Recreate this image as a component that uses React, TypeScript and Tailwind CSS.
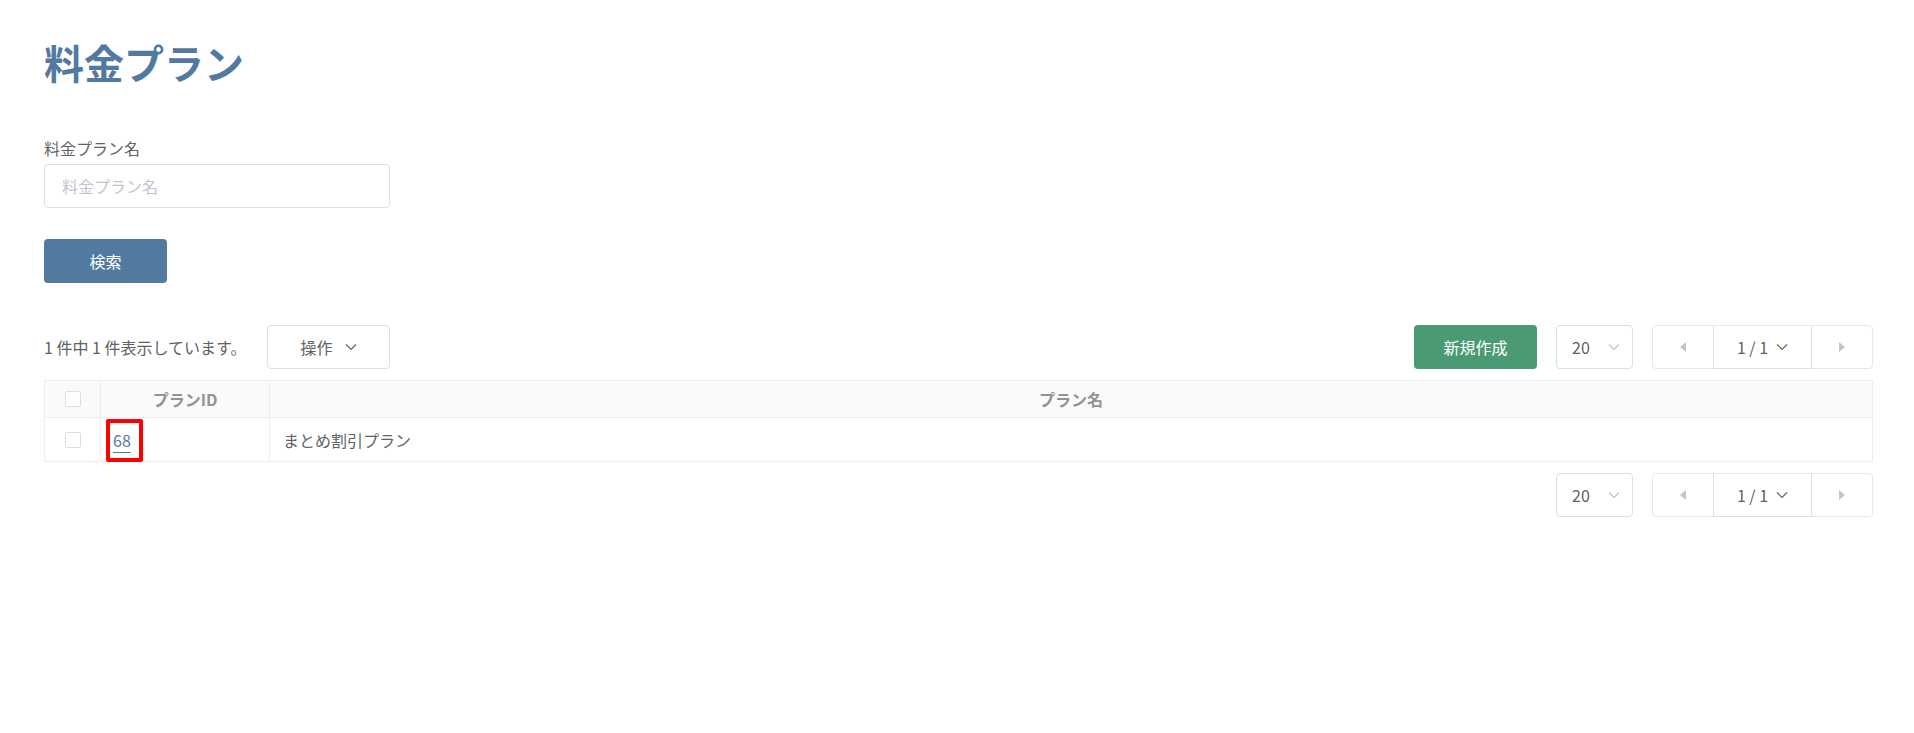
import React from 'react'

function Chevron({ className }: { className?: string }) {
    return (
        <svg viewBox="0 0 12 8" className={className} fill="none" stroke="currentColor" strokeWidth="1.2">
            <polyline points="1,1.5 6,6.5 11,1.5" />
        </svg>
    )
}

function Triangle({ dir }: { dir: 'left' | 'right' }) {
    return (
        <svg viewBox="0 0 6 10" className="w-[6px] h-[10px] text-[#c0c4cc]" fill="currentColor">
            {dir === 'left' ? <polygon points="6,0 6,10 0,5" /> : <polygon points="0,0 0,10 6,5" />}
        </svg>
    )
}

function Checkbox() {
    return <span className="block w-4 h-4 border border-[#dcdfe6] rounded-[2px] bg-white" />
}

function PageSize() {
    return (
        <div className="w-[77px] h-[44px] border border-[#dcdfe6] rounded-[4px] flex items-center justify-between pl-[15px] pr-[12px] text-[16px] text-[#606266] bg-white">
            <span>20</span>
            <Chevron className="w-[12px] h-[8px] text-[#c0c4cc]" />
        </div>
    )
}

function Pager() {
    return (
        <div className="flex h-[44px] border border-[#e4e7ed] rounded-[4px] bg-white">
            <div className="w-[60px] flex items-center justify-center">
                <Triangle dir="left" />
            </div>
            <div className="w-[99px] flex items-center justify-center gap-[8px] border-x border-b border-[#dcdfe6] -mb-px text-[16px] text-[#606266]">
                <span>1 / 1</span>
                <Chevron className="w-[12px] h-[8px] text-[#606266]" />
            </div>
            <div className="w-[60px] flex items-center justify-center">
                <Triangle dir="right" />
            </div>
        </div>
    )
}

export default function App() {
    return (
        <div className="bg-white pl-[44px] pr-[41px] font-['Noto_Sans_CJK_JP','Noto_Sans',sans-serif] text-[#606266]">
            <h1 className="pt-[42px] text-[40px] leading-[40px] font-bold text-[#527aa0]">料金プラン</h1>

            <div className="mt-[56px]">
                <label className="block text-[16px] leading-[20px] text-[#606266]">料金プラン名</label>
                <div className="mt-[6px] w-[346px] h-[44px] border border-[#dcdfe6] rounded-[4px] flex items-center pl-[17px] text-[16px] text-[#c0c4cc]">
                    料金プラン名
                </div>
            </div>

            <button className="mt-[31px] w-[123px] h-[44px] rounded-[4px] bg-[#527aa0] text-white text-[16px] flex items-center justify-center">
                検索
            </button>

            <div className="mt-[42px] h-[44px] flex items-center">
                <span className="w-[194px] shrink-0 text-[16px] whitespace-nowrap">1 件中 1 件表示しています。</span>
                <button className="ml-[29px] w-[123px] h-[44px] border border-[#dcdfe6] rounded-[4px] flex items-center justify-center gap-[12px] text-[16px] text-[#606266] bg-white">
                    <span>操作</span>
                    <Chevron className="w-[12px] h-[8px] text-[#606266]" />
                </button>
                <div className="ml-auto flex items-center gap-[19px]">
                    <button className="w-[123px] h-[44px] rounded-[4px] bg-[#4a9b74] text-white text-[16px] flex items-center justify-center">
                        新規作成
                    </button>
                    <PageSize />
                    <Pager />
                </div>
            </div>

            <table className="mt-[11px] w-full border-collapse border border-[#ebeef5] text-[16px]">
                <thead>
                    <tr className="h-[37px] bg-[#fafafa]">
                        <th className="w-[56px] border border-[#ebeef5]">
                            <div className="flex justify-center"><Checkbox /></div>
                        </th>
                        <th className="w-[169px] border border-[#ebeef5] font-bold text-[#909399]">プランID</th>
                        <th className="border border-[#ebeef5] font-bold text-[#909399]">プラン名</th>
                    </tr>
                </thead>
                <tbody>
                    <tr className="h-[44px]">
                        <td className="border border-[#ebeef5]">
                            <div className="flex justify-center"><Checkbox /></div>
                        </td>
                        <td className="relative border border-[#ebeef5] pl-[12px]">
                            <a className="text-[#527aa0] underline underline-offset-[5px] decoration-[#527aa0]">68</a>
                            <span className="absolute left-[5px] top-px w-[37px] h-[43px] border-4 border-[#ff0000] rounded-[2px]" />
                        </td>
                        <td className="border border-[#ebeef5] pl-[13px] text-[#606266]">まとめ割引プラン</td>
                    </tr>
                </tbody>
            </table>

            <div className="mt-[11px] flex justify-end items-center gap-[19px]">
                <PageSize />
                <Pager />
            </div>
        </div>
    )
}
